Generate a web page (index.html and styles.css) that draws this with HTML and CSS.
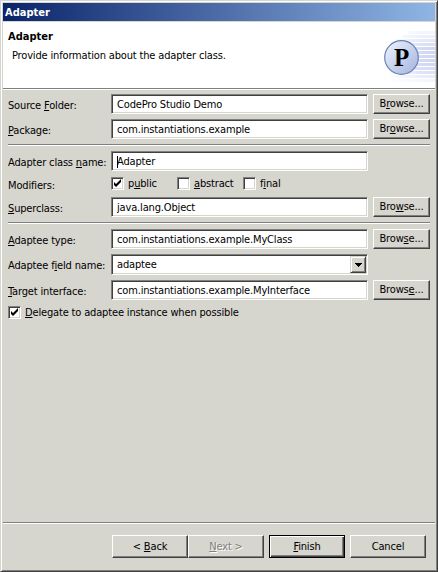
FILE: index.html
```html
<!DOCTYPE html>
<html lang="en">
<head>
<meta charset="utf-8">
<title>Adapter</title>
<link rel="stylesheet" href="styles.css">
</head>
<body>
<main class="window">
  <div class="titlebar">Adapter</div>
  <header class="banner">
    <div class="banner-text">
      <h1>Adapter</h1>
      <p>Provide information about the adapter class.</p>
    </div>
    <svg class="logo" width="65" height="65" viewBox="370 22 65 65">
      <defs>
        <linearGradient id="fade" gradientUnits="userSpaceOnUse" x1="386" x2="435" y1="0" y2="0"><stop offset="0" stop-color="#d5dbf4" stop-opacity="0"/><stop offset=".7" stop-color="#d5dbf4"/><stop offset="1" stop-color="#d0d7f2"/></linearGradient>
        <linearGradient id="ball" x1="0" x2="1" y1="0" y2="1"><stop offset="0" stop-color="#f2f5fe"/><stop offset="1" stop-color="#a3b2dd"/></linearGradient>
      </defs>
      <g fill="url(#fade)">
        <rect x="408" y="31" width="27" height="3" opacity=".25"/>
        <rect x="402" y="35" width="33" height="3" opacity=".4"/>
        <rect x="396" y="39" width="39" height="3" opacity=".6"/>
        <rect x="393" y="43" width="42" height="3" opacity=".8"/>
        <rect x="391" y="47" width="44" height="3"/>
        <rect x="390" y="51" width="45" height="3"/>
        <rect x="390" y="55" width="45" height="3"/>
        <rect x="390" y="59" width="45" height="3"/>
        <rect x="391" y="63" width="44" height="3"/>
        <rect x="393" y="67" width="42" height="3" opacity=".9"/>
        <rect x="390" y="71" width="45" height="3" opacity=".75"/>
        <rect x="386" y="75" width="49" height="3" opacity=".5"/>
        <rect x="392" y="79" width="43" height="3" opacity=".25"/>
      </g>
      <circle cx="401.5" cy="57.5" r="16.8" fill="url(#ball)" stroke="#6685b3" stroke-width="1.2"/>
      <text class="logo-letter" x="394" y="65.5">P</text>
    </svg>
  </header>
  <form class="form">
    <div class="row"><label>Source <u>F</u>older:</label><div class="field">CodePro Studio Demo</div><button type="button" class="btn">B<u>r</u>owse...</button></div>
    <div class="row"><label><u>P</u>ackage:</label><div class="field">com.instantiations.example</div><button type="button" class="btn">Br<u>o</u>wse...</button></div>
    <hr>
    <div class="row"><label>Adapter class <u>n</u>ame:</label><div class="field focused">Adapter</div></div>
    <div class="row modifiers"><label>Modifiers:</label>
      <div class="check w-public"><span class="box"><svg width="9" height="9" viewBox="0 0 9 9"><path d="M1 3v3l2 2 5-5V0L3 5z"/></svg></span><span>p<u>u</u>blic</span></div>
      <div class="check w-abstract"><span class="box"></span><span><u>a</u>bstract</span></div>
      <div class="check"><span class="box"></span><span>f<u>i</u>nal</span></div>
    </div>
    <div class="row"><label><u>S</u>uperclass:</label><div class="field">java.lang.Object</div><button type="button" class="btn">Bro<u>w</u>se...</button></div>
    <hr>
    <div class="row"><label><u>A</u>daptee type:</label><div class="field">com.instantiations.example.MyClass</div><button type="button" class="btn">Brow<u>s</u>e...</button></div>
    <div class="row combo-row"><label>Adaptee f<u>i</u>eld name:</label><div class="field combo"><span>adaptee</span><span class="arrow"><svg width="7" height="4" viewBox="0 0 7 4" shape-rendering="crispEdges"><path d="M0 0h7v1H6v1H5v1H4v1H3V3H2V2H1V1H0z"/></svg></span></div></div>
    <div class="row"><label><u>T</u>arget interface:</label><div class="field">com.instantiations.example.MyInterface</div><button type="button" class="btn">Brows<u>e</u>...</button></div>
    <div class="check delegate"><span class="box"><svg width="9" height="9" viewBox="0 0 9 9"><path d="M1 3v3l2 2 5-5V0L3 5z"/></svg></span><span><u>D</u>elegate to adaptee instance when possible</span></div>
  </form>
  <footer class="footer">
    <button type="button" class="btn">&lt; <u>B</u>ack</button>
    <button type="button" class="btn disabled"><u>N</u>ext &gt;</button>
    <button type="button" class="btn default"><u>F</u>inish</button>
    <button type="button" class="btn">Cancel</button>
  </footer>
</main>
</body>
</html>
```
FILE: styles.css
```css
* { box-sizing: border-box; }
body { margin: 0; font: 11px/13px "DejaVu Sans Condensed", "DejaVu Sans", sans-serif; font-stretch: condensed; letter-spacing: -.16px; color: #000; }
.window { width: 438px; height: 572px; background: #d6d5ce; border: 1px solid; border-color: #d6d5ce #404040 #404040 #d6d5ce; box-shadow: inset 1px 1px #fff, inset -1px -1px #808080; padding: 2px; display: flex; flex-direction: column; }
.titlebar { height: 18px; flex: none; padding: 3px 2px 0; color: #fff; font-weight: bold; letter-spacing: 0; background: linear-gradient(90deg, #0a246a, #8fb5e5); }
.banner { height: 67px; flex: none; margin-top: 1px; background: #fff; border-bottom: 1px solid #808080; box-shadow: 0 1px #fff; display: flex; justify-content: space-between; }
.banner-text { padding: 8px 0 0 5px; }
h1 { font-size: 11px; line-height: 13px; letter-spacing: 0; margin: 0; }
p { margin: 6px 0 0 4px; white-space: nowrap; }
.logo-letter { font: bold 25px "Liberation Serif", serif; }
.form { flex: 1; padding: 5px 5px 0; }
.row { display: flex; height: 20px; margin-bottom: 5px; }
label { width: 103px; padding-top: 5px; white-space: nowrap; flex: none; }
.field { width: 257px; background: #fff; border: 1px solid; border-color: #808080 #fff #fff #808080; box-shadow: inset 1px 1px #404040, inset -1px -1px #d6d5ce; padding: 3px 0 0 5px; margin-right: 5px; }
.btn { font: inherit; letter-spacing: inherit; color: #000; text-align: center; width: 57px; padding: 0 0 1px; background: #d6d5ce; border: 1px solid; border-color: #fff #404040 #404040 #fff; box-shadow: inset -1px -1px #808080; white-space: nowrap; }
u { text-decoration-thickness: 1px; text-underline-offset: 1px; text-decoration-skip-ink: none; }
hr { margin: 0 0 5px; border: 0; height: 2px; background: linear-gradient(#808080 50%, #fff 50%); }
.focused::before { content: ""; display: inline-block; width: 1px; height: 12px; background: #000; margin-right: -1px; vertical-align: -3px; }
.modifiers { height: 16px; }
.modifiers label { padding-top: 3px; }
.check { display: flex; height: 15px; padding-top: 1px; }
.box { width: 13px; height: 13px; margin-right: 4px; background: #fff; border: 1px solid; border-color: #808080 #fff #fff #808080; box-shadow: inset 1px 1px #404040, inset -1px -1px #d6d5ce; display: grid; place-items: center; }
.w-public, .w-abstract { width: 66px; }
.combo-row { height: 21px; }
.combo { display: flex; justify-content: space-between; padding: 0 1px 0 5px; }
.combo span:first-child { padding-top: 3px; }
.arrow { width: 16px; height: 17px; margin-top: 1px; background: #d6d5ce; border: 1px solid; border-color: #d6d5ce #404040 #404040 #d6d5ce; box-shadow: inset 1px 1px #fff, inset -1px -1px #808080; display: grid; place-items: center; }
.delegate { margin-top: 4px; }
.footer { height: 47px; flex: none; border-top: 1px solid #808080; box-shadow: inset 0 1px #fff; padding: 12px 9px 0 0; display: flex; justify-content: flex-end; }
.footer .btn { width: 76px; height: 23px; }
.footer .default { margin: 0 5px; border-color: #000; box-shadow: inset 1px 1px #fff, inset -1px -1px #404040, inset -2px -2px #808080; }
.footer .disabled { color: #808080; text-shadow: 1px 1px #fff; }
```
